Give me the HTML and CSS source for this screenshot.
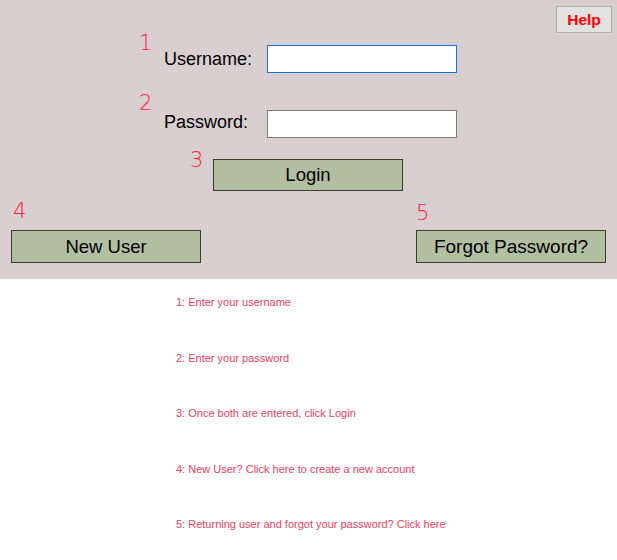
FILE: index.html
```html
<!DOCTYPE html>
<html>
<head>
<meta charset="utf-8">
<link rel="stylesheet" href="styles.css">
</head>
<body>
<div class="panel">
  <div class="help-row"><button class="help">Help</button></div>
  <div class="field field-user">
    <span class="num">1</span>
    <label class="label">Username:</label>
    <input class="input input-focus" type="text">
  </div>
  <div class="field field-pass">
    <span class="num">2</span>
    <label class="label">Password:</label>
    <input class="input" type="password">
  </div>
  <div class="login-row">
    <span class="num num-login">3</span>
    <button class="btn btn-login">Login</button>
  </div>
  <div class="bottom-row">
    <div class="group group-new"><span class="num">4</span><button class="btn">New User</button></div>
    <div class="group group-forgot"><span class="num">5</span><button class="btn">Forgot Password?</button></div>
  </div>
</div>
<div class="notes">
  <p class="note">1: Enter your username</p>
  <p class="note">2: Enter your password</p>
  <p class="note">3: Once both are entered, click Login</p>
  <p class="note">4: New User? Click here to create a new account</p>
  <p class="note">5: Returning user and forgot your password? Click here</p>
</div>
</body>
</html>
```

FILE: styles.css
```css
* { box-sizing: border-box; }
html, body { margin: 0; padding: 0; background: #ffffff; }
body { font-family: "Liberation Sans", Arial, sans-serif; }

.panel {
  height: 279px;
  background: #d9cfd0;
}

.help-row {
  display: flex;
  justify-content: flex-end;
  padding: 6px 5px 0 0;
  height: 33px;
}
.help {
  width: 56px;
  height: 27px;
  background: #e1e1e1;
  border: 1px solid #adadad;
  color: #ff0000;
  font-family: "Liberation Sans", Arial, sans-serif;
  font-weight: bold;
  font-size: 15.5px;
  padding: 0;
}

.num {
  display: block;
  font-family: "DejaVu Sans", sans-serif;
  font-weight: 200;
  font-size: 21px;
  line-height: 21px;
  height: 21px;
  color: #ff1a40;
}

.field {
  display: flex;
  align-items: flex-start;
  padding-left: 139px;
}
.field .num { width: 25px; }
.field-user { margin-top: 0; }
.field-pass { margin-top: 20px; }

.label {
  width: 103px;
  margin-top: 12px;
  line-height: 28px;
  font-size: 18px;
  color: #000;
}
.field-pass .label { margin-top: 15px; }
.field-pass .input { margin-top: 17px; }

.input {
  width: 190px;
  height: 28px;
  margin: 12px 0 0 0;
  border: 1px solid #7a7a7a;
  background: #fff;
  padding: 0 4px;
  outline: none;
}
.input-focus { border-color: #1874d2; }

.btn {
  width: 190px;
  height: 33px;
  background: #b3bfa1;
  border: 1px solid #3a3f2c;
  font-family: "Liberation Sans", Arial, sans-serif;
  font-size: 18.5px;
  color: #000;
  padding: 0;
}

.login-row {
  display: flex;
  align-items: flex-start;
  margin-top: 12px;
  padding-left: 190px;
}
.num-login { width: 23px; }
.btn-login { margin-top: 9px; height: 32px; }

.bottom-row {
  display: flex;
  justify-content: space-between;
  margin-top: 10px;
  padding: 0 11px;
}
.group { display: flex; flex-direction: column; }
.group .btn { margin-top: 8px; }
.group-new .num { padding-left: 2px; }
.group-forgot .num { margin-top: 2px; }
.group-forgot .btn { margin-top: 6px; font-size: 19px; }

.notes {
  display: flex;
  flex-direction: column;
  gap: 41.5px;
  padding: 16px 0 0 176px;
}
.note {
  margin: 0;
  font-family: "Liberation Sans", Arial, sans-serif;
  font-size: 11px;
  line-height: 14px;
  color: #f0405e;
}
```
